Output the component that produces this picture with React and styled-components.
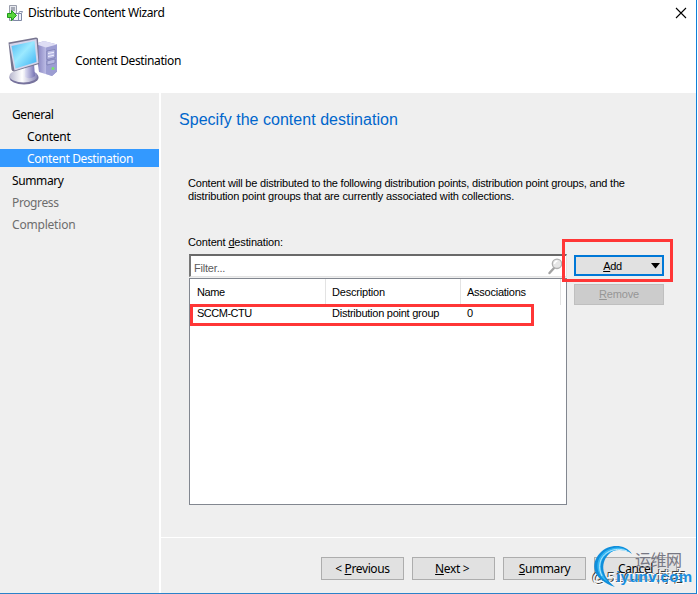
import React from 'react';
import styled, { createGlobalStyle } from 'styled-components';

const Global = createGlobalStyle`
  * { box-sizing: border-box; }
  body { margin: 0; background: #fff; overflow: hidden; }
`;

const ui = '"Noto Sans", "Open Sans", sans-serif';
const classic = '"Liberation Sans", Arial, sans-serif';

const Wizard = styled.div`
  position: relative;
  width: 697px;
  height: 594px;
  display: flex;
  flex-direction: column;
  background: #fff;
  border-right: 1px solid #0f80d8;
  border-bottom: 1px solid #2a82c9;
  font: 12px/16px ${ui};
  color: #000;
`;
const Label = styled.span`
  white-space: nowrap;
  letter-spacing: ${(p) => (p.$track === undefined ? -0.38 : p.$track)}px;
`;
const TitleBar = styled.header`
  height: 26px;
  flex: none;
  display: flex;
  align-items: center;
  padding: 0 9px 0 7px;
  gap: 5px;
`;
const Close = styled.button`
  display: flex;
  margin-left: auto;
  padding: 0;
  border: 0;
  background: none;
`;
const Banner = styled.div`
  height: 67px;
  flex: none;
  display: flex;
  align-items: center;
  padding: 2px 0 0 7px;
  gap: 16px;
`;
const Body = styled.div`
  flex: 1;
  display: flex;
  gap: 2px;
  min-height: 0;
`;
const Sidebar = styled.nav`
  width: 159px;
  padding-top: 12px;
  background: #efefef;
`;
const Step = styled.div`
  height: 18px;
  margin-bottom: 4px;
  padding-left: ${(p) => (p.$nested ? 27 : 12)}px;
  line-height: 19px;
  color: ${(p) => (p.$active ? '#fff' : p.$pending ? '#6d6d6d' : '#000')};
  background: ${(p) => (p.$active ? '#3399ff' : 'transparent')};
`;
const Content = styled.section`
  flex: 1;
  display: flex;
  flex-direction: column;
  gap: 1px;
`;
const Page = styled.main`
  height: 444px;
  padding: 15px 0 0 28px;
  background: #efefef;
  font: 11px/13px ${classic};
`;
const Heading = styled.h1`
  margin: 0 0 0 -10px;
  font: 400 16px/23px ${classic};
  color: #0066cc;
`;
const Description = styled.p`
  height: 26px;
  margin: 46px 0 0 -1px;
`;
const Caption = styled.div`
  margin: 33px 0 5px -1px;
  height: 13px;
`;
const Columns = styled.div`
  display: flex;
  gap: 7px;
`;
const ListColumn = styled.div`
  width: 378px;
`;
const Filter = styled.div`
  height: 23px;
  display: flex;
  align-items: center;
  justify-content: space-between;
  padding: 1px 3px 0 3px;
  border: solid;
  border-width: 2px 1px 1px 2px;
  border-color: #696969 #e3e3e3 #e3e3e3 #777;
  background: #fff;
  color: #5c5c5c;
  span { padding-top: 3px; }
`;
const List = styled.div`
  height: 227px;
  margin-top: 1px;
  border: 1px solid #828790;
  background: #fff;
`;
const Row = styled.div`
  display: grid;
  grid-template-columns: 136px 135px 100px;
  height: ${(p) => (p.$header ? 26 : 17)}px;
  line-height: ${(p) => (p.$header ? 26 : 17)}px;
`;
const Cell = styled.div`
  padding-left: ${(p) => (p.$first ? 7 : 6)}px;
  border-right: 1px solid ${(p) => (p.$header ? '#e3e3e3' : 'transparent')};
`;
const Actions = styled.div`
  display: flex;
  flex-direction: column;
  gap: 8px;
  padding-top: 1px;
`;
const Button = styled.button`
  width: ${(p) => p.$width || 83}px;
  height: ${(p) => p.$height || 23}px;
  display: flex;
  align-items: center;
  justify-content: center;
  padding: 0;
  border: ${(p) => (p.$focused ? '2px solid #0078d7' : p.disabled ? '1px solid #bfbfbf' : '1px solid #adadad')};
  background: ${(p) => (p.disabled ? '#cccccc' : '#e1e1e1')};
  color: ${(p) => (p.disabled ? '#969696' : '#000')};
  font: ${(p) => (p.$classic ? `11px/13px ${classic}` : `12px/16px ${ui}`)};
`;
const DropButton = styled(Button)`
  display: grid;
  grid-template-columns: 1fr 11px;
  padding: 1px 0 0 0;
  svg { display: block; }
  span { padding-right: 2px; }
`;
const Footer = styled.footer`
  flex: 1;
  display: flex;
  justify-content: flex-end;
  align-items: flex-start;
  gap: 8px;
  padding: 19px 19px 0 0;
  background: #efefef;
`;
const Mark = styled.div`
  position: absolute;
  left: ${(p) => p.$x}px;
  top: ${(p) => p.$y}px;
  width: ${(p) => p.$w}px;
  height: ${(p) => p.$h}px;
  border: 3px solid #ff3636;
`;
const Watermark = styled.div`
  position: absolute;
  left: 588px;
  top: 540px;
  width: 110px;
  height: 54px;
  svg { display: block; }
`;

const TitleIcon = () => (
  <svg width="16" height="17" viewBox="0 0 16 17">
    <path d="M2.5.5h7v15h-7z" fill="#e8eaf0" stroke="#9a9eac" />
    <path d="M4 3h4M4 5h4" stroke="#646b7d" />
    <path d="M6.5 8.5h8v7h-8z" fill="#f1f3fa" stroke="#7f88a5" />
    <path d="M11.5 8.5l1-2h3l-1 2M11.5 9v6" fill="none" stroke="#8a94af" />
    <path d="M.5 8.5h4v-3l5 5-5 5v-3h-4z" fill="#57d43b" stroke="#1e9b19" />
  </svg>
);

const Computer = () => (
  <svg width="52" height="50" viewBox="0 0 52 50">
    <defs>
      <linearGradient id="screen" x1="0" y1="0" x2="1" y2="1">
        <stop stopColor="#4db9f2" /><stop offset=".45" stopColor="#9be9ff" /><stop offset="1" stopColor="#35aef3" />
      </linearGradient>
      <linearGradient id="tower"><stop stopColor="#7773b5" /><stop offset=".55" stopColor="#c3c3ea" /><stop offset="1" stopColor="#8587c0" /></linearGradient>
      <linearGradient id="stand"><stop stopColor="#b9b9cf" /><stop offset=".45" stopColor="#fff" /><stop offset="1" stopColor="#8582b5" /></linearGradient>
      <linearGradient id="neck"><stop stopColor="#dfdff3" /><stop offset="1" stopColor="#7673b4" /></linearGradient>
    </defs>
    <path d="M28 8l9-3 13 3.500v27l-5 4.500-13-4z" fill="url(#tower)" />
    <path d="M39 11l11-2.500v27l-5 4.500-6-2z" fill="#9c9dd2" />
    <path d="M28 8l9-3 13 3.500-11 3z" fill="#deddf4" />
    <path d="M40 15l8-1.500v8l-8 2zM40 25l8-2v4l-8 2z" fill="#b9bae4" stroke="#7778ae" strokeWidth=".7" />
    <path d="M41 17.500l6-1.200M41 20.500l6-1.300" stroke="#efefff" />
    <circle cx="46" cy="32.500" r="1.500" fill="#77e66b" />
    <ellipse cx="17" cy="41.500" rx="14.500" ry="7" fill="#77739d" />
    <ellipse cx="16.500" cy="40" rx="14" ry="6.500" fill="url(#stand)" />
    <path d="M18 30l9-2 1 12q-5 4-10 1z" fill="url(#neck)" />
    <path d="M1.500 6.500L29 1.500q2 0 2 1.500l1 25-25 7.500q-2 0-2.500-2z" fill="#77758f" />
    <path d="M2.500 8l27-5 2 24-24 7.500z" fill="#d5d5eb" />
    <path d="M4.500 10l23-5 2 21-21 6.500z" fill="url(#screen)" />
  </svg>
);

const Search = () => (
  <svg width="15" height="17" viewBox="0 0 15 17">
    <path d="M1.500 15l5-5.500" stroke="#a3a3a3" strokeWidth="2.400" strokeLinecap="round" />
    <circle cx="9" cy="5.800" r="4.700" fill="#e6e6e6" stroke="#b0b0b0" strokeWidth="1.300" />
    <path d="M6.500 6a3 3 0 0 1 3-3" stroke="#fff" strokeWidth="1.500" fill="none" />
  </svg>
);

export default function App() {
  return (
    <>
      <Global />
      <Wizard>
        <TitleBar>
          <TitleIcon />
          <Label>Distribute Content Wizard</Label>
          <Close aria-label="Close">
            <svg width="12" height="12" viewBox="0 0 12 12"><path d="M1 1l10 10M11 1L1 11" stroke="#000" strokeWidth="1.1" /></svg>
          </Close>
        </TitleBar>
        <Banner><Computer /><Label>Content Destination</Label></Banner>
        <Body>
          <Sidebar>
            <Step><Label>General</Label></Step>
            <Step $nested><Label $track={-0.2}>Content</Label></Step>
            <Step $nested $active><Label>Content Destination</Label></Step>
            <Step><Label>Summary</Label></Step>
            <Step $pending><Label>Progress</Label></Step>
            <Step $pending><Label $track={-0.2}>Completion</Label></Step>
          </Sidebar>
          <Content>
            <Page>
              <Heading><Label $track={0.03}>Specify the content destination</Label></Heading>
              <Description>
                <Label $track={-0.2}>Content will be distributed to the following distribution points, distribution point groups, and the</Label><br />
                <Label $track={-0.165}>distribution point groups that are currently associated with collections.</Label>
              </Description>
              <Caption><Label $track={-0.15}>Content <u>d</u>estination:</Label></Caption>
              <Columns>
                <ListColumn>
                  <Filter><Label $track={-0.2}>Filter...</Label><Search /></Filter>
                  <List>
                    <Row $header>
                      <Cell $first $header><Label $track={-0.4}>Name</Label></Cell>
                      <Cell $header><Label $track={-0.2}>Description</Label></Cell>
                      <Cell $header><Label $track={-0.25}>Associations</Label></Cell>
                    </Row>
                    <Row>
                      <Cell $first><Label $track={-0.5}>SCCM-CTU</Label></Cell>
                      <Cell><Label $track={-0.25}>Distribution point group</Label></Cell>
                      <Cell><Label>0</Label></Cell>
                    </Row>
                  </List>
                </ListColumn>
                <Actions>
                  <DropButton $classic $focused $width={90} $height={21}>
                    <Label $track={-0.3}><u>A</u>dd</Label>
                    <svg width="9" height="6"><path d="M0 0h9L4.500 5.500z" /></svg>
                  </DropButton>
                  <Button $classic disabled $width={90} $height={21}><Label $track={-0.2}><u>R</u>emove</Label></Button>
                </Actions>
              </Columns>
            </Page>
            <Footer>
              <Button><Label>&lt; <u>P</u>revious</Label></Button>
              <Button><Label>&nbsp;<u>N</u>ext &gt;&nbsp;&nbsp;</Label></Button>
              <Button><Label><u>S</u>ummary</Label></Button>
              <Button><Label>Cancel</Label></Button>
            </Footer>
          </Content>
        </Body>
        <Mark $x={562} $y={239} $w={111} $h={43} />
        <Mark $x={190} $y={304} $w={344} $h={22} />
        <Watermark>
          <svg width="110" height="54" viewBox="0 0 110 54">
            <g fontFamily="Liberation Sans, Noto Sans CJK SC, sans-serif" fontSize="15">
              <text x="3" y="42" fill="#3c3c3c" textLength="95">@51CTO博客</text>
              <text x="4" y="43" fill="#fff" textLength="95">@51CTO博客</text>
            </g>
            <path d="M44 14C37 3 20 4 12 13 2 24 4 39 27 47 14 37 12 24 20 15c6-7 16-8 24-1z" fill="#0f8edb" />
            <path d="M41 12C33 4 18 7 12 17 6 27 11 37 20 42 10 31 11 20 19 14c7-5 15-5 22-2z" fill="#35b7f3" />
            <path d="M39 11C26 6 14 13 12 23c-1 5 0 9 2 13" fill="none" stroke="#d9f2ff" strokeWidth=".8" />
            <text x="47" y="26" fontFamily="Noto Sans CJK SC, sans-serif" fontSize="16" fill="#777783" textLength="47">运维网</text>
            <text x="28" y="42" fontFamily="Liberation Sans, sans-serif" fontWeight="700" fontSize="15" fill="#1a8fe0" textLength="76">iyunv.com</text>
          </svg>
        </Watermark>
      </Wizard>
    </>
  );
}
